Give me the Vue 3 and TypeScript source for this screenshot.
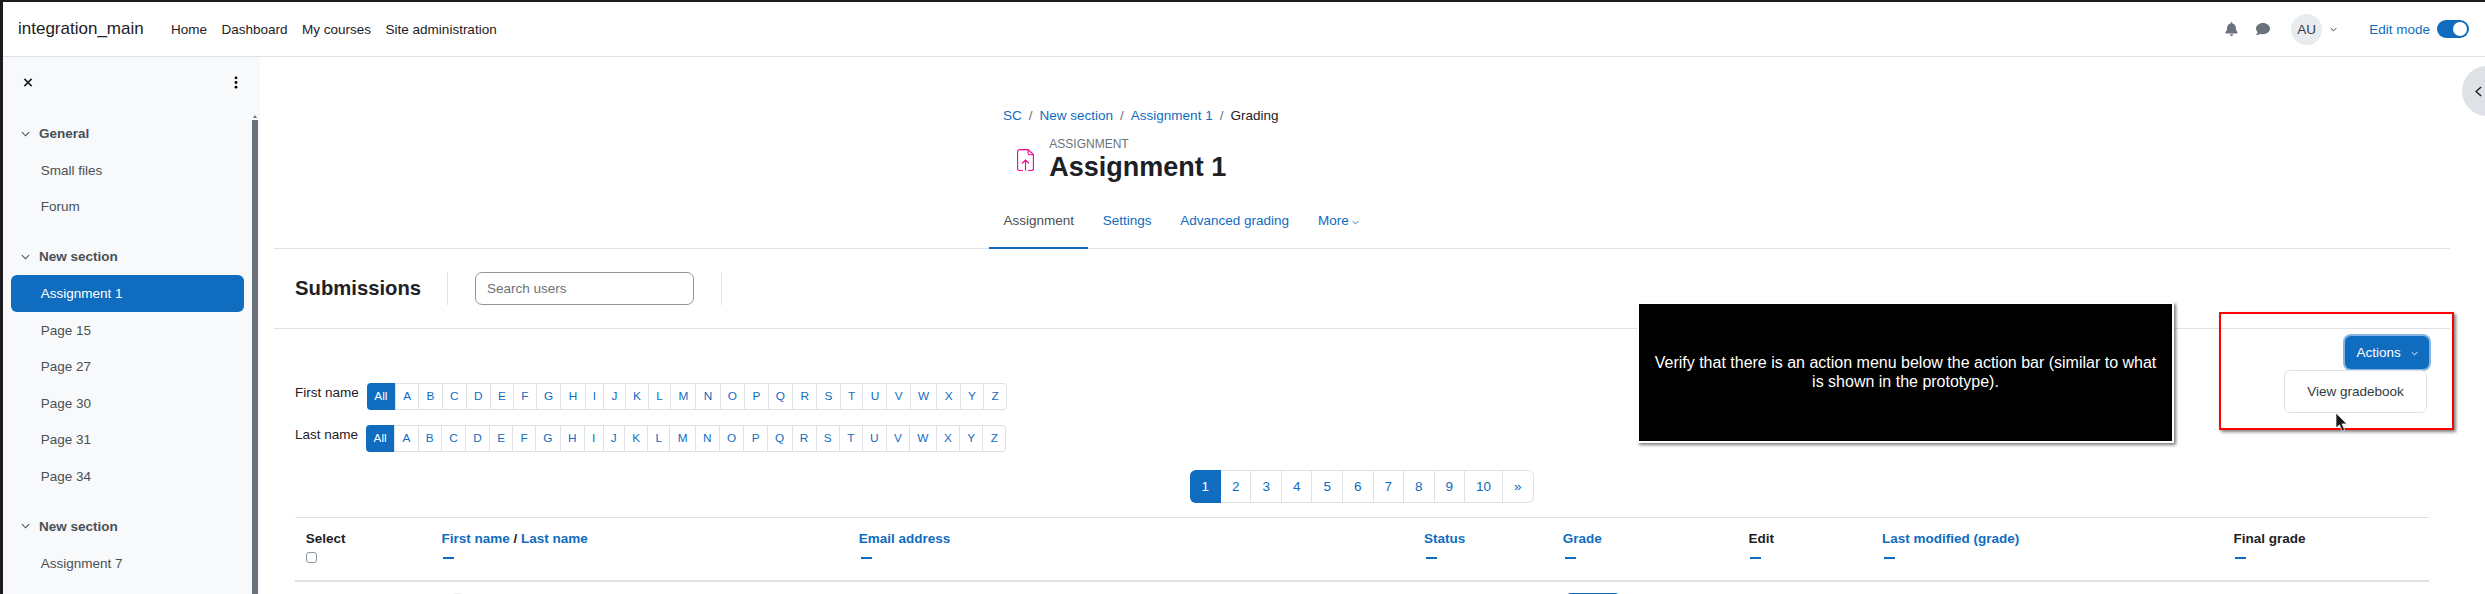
<script setup lang="ts">
const navLinks = ['Home', 'Dashboard', 'My courses', 'Site administration']
const letters = 'ABCDEFGHIJKLMNOPQRSTUVWXYZ'.split('')
const pages = ['2', '3', '4', '5', '6', '7', '8', '9', '10', '»']
const tabs = ['Settings', 'Advanced grading']
const filters = ['First name', 'Last name']

interface Column {
  label: string
  linked: boolean
}

const columns: Column[] = [
  { label: 'Email address', linked: true },
  { label: 'Status', linked: true },
  { label: 'Grade', linked: true },
  { label: 'Edit', linked: false },
  { label: 'Last modified (grade)', linked: true },
  { label: 'Final grade', linked: false },
]

const sections = [
  { title: 'General', items: ['Small files', 'Forum'] },
  { title: 'New section', items: ['Assignment 1', 'Page 15', 'Page 27', 'Page 30', 'Page 31', 'Page 34'] },
  { title: 'New section', items: ['Assignment 7'] },
]
</script>

<template>
  <div class="page">
    <header class="navbar">
      <span class="brand">integration_main</span>
      <nav class="nav-links">
        <a v-for="link in navLinks" :key="link">{{ link }}</a>
      </nav>
      <div class="nav-right">
        <svg viewBox="0 0 448 512" width="13" height="14"><path fill="#6a737b" d="M224 512a64 64 0 0 0 64-64H160a64 64 0 0 0 64 64zm215-150c-19-21-55-52-55-154 0-78-54-140-128-155V32a32 32 0 1 0-64 0v21C118 68 64 130 64 208c0 102-36 133-55 154a31 31 0 0 0-9 22c0 16 13 32 32 32h384c19 0 32-16 32-32a31 31 0 0 0-9-22z"/></svg>
        <svg class="msg" viewBox="0 0 512 512" width="14" height="14"><path fill="#6a737b" d="M256 32C115 32 0 125 0 240c0 50 22 95 58 131-13 50-55 95-55 96a8 8 0 0 0 6 13c67 0 117-32 142-52 32 12 67 20 105 20 141 0 256-93 256-208S397 32 256 32z"/></svg>
        <span class="avatar">AU</span>
        <svg class="caret" viewBox="0 0 10 6" width="7" height="5"><path d="M1 1l4 4 4-4" fill="none" stroke="#343a40" stroke-width="1.4"/></svg>
        <a class="edit-label">Edit mode</a>
        <span class="switch"><span class="knob"></span></span>
      </div>
    </header>

    <div class="body-row">
      <aside class="drawer">
        <div class="drawer-head">
          <svg viewBox="0 0 10 10" width="10" height="9"><path d="M1 1l8 8M9 1l-8 8" stroke="#1d2125" stroke-width="1.8"/></svg>
          <svg viewBox="0 0 4 14" width="4" height="13"><circle cx="2" cy="2" r="1.5"/><circle cx="2" cy="7" r="1.5"/><circle cx="2" cy="12" r="1.5"/></svg>
        </div>
        <div class="drawer-scroll">
          <section v-for="(sec, i) in sections" :key="i" class="course-sec">
            <div class="sec-title">
              <svg viewBox="0 0 10 6" width="9" height="6"><path d="M1 1l4 4 4-4" fill="none" stroke="#495057" stroke-width="1.2"/></svg>
              <span>{{ sec.title }}</span>
            </div>
            <a v-for="item in sec.items" :key="item" class="sec-item" :class="{ active: item === 'Assignment 1' }">{{ item }}</a>
          </section>
        </div>
        <span class="scroll-arrow"></span>
        <div class="scrollbar"></div>
      </aside>

      <main class="main">
        <div class="page-head">
          <div class="crumbs">
            <a>SC</a><i>/</i><a>New section</a><i>/</i><a>Assignment 1</a><i>/</i><span>Grading</span>
          </div>
          <div class="title-row">
            <svg viewBox="0 0 17 22" width="17" height="22"><path d="M6 21.500H2.500A2 2 0 0 1 .6 19.500V2.500A2 2 0 0 1 2.500.6h8.500l5.400 5v14A2 2 0 0 1 14.500 21.500H11M11 .6v3.400a1.700 1.700 0 0 0 1.700 1.700h3.700M8.500 21.700V11M5 14.500L8.500 11l3.500 3.500" fill="none" stroke="#f7028f" stroke-width="1.100"/></svg>
            <div>
              <div class="kicker">ASSIGNMENT</div>
              <h1>Assignment 1</h1>
            </div>
          </div>
        </div>
        <div class="tabs">
          <span class="tab current">Assignment</span>
          <a v-for="t in tabs" :key="t" class="tab">{{ t }}</a>
          <a class="tab more">More
            <svg viewBox="0 0 10 6" width="7" height="5"><path d="M1 1l4 4 4-4" fill="none" stroke="#0f6cbf" stroke-width="1.3"/></svg>
          </a>
        </div>
        <div class="action-bar">
          <h2>Submissions</h2>
          <span class="sep"></span>
          <input class="search" placeholder="Search users" />
          <span class="sep"></span>
        </div>
        <div class="content">
          <div class="actions-row">
            <button class="actions-btn">Actions
              <svg viewBox="0 0 10 6" width="7" height="5"><path d="M1 1l4 4 4-4" fill="none" stroke="#fff" stroke-width="1.300"/></svg>
            </button>
            <div class="menu">View gradebook</div>
          </div>
          <div v-for="f in filters" :key="f" class="initials">
            <span class="init-label">{{ f }}</span>
            <div class="bar">
              <span class="cell on">All</span>
              <a v-for="l in letters" :key="l" class="cell">{{ l }}</a>
            </div>
          </div>
          <div class="pager">
            <span class="pg on">1</span>
            <a v-for="p in pages" :key="p" class="pg">{{ p }}</a>
          </div>
          <div class="table-head grid">
            <div class="th">
              <strong>Select</strong>
              <span class="check"></span>
            </div>
            <div class="th">
              <span><a>First name</a> / <a>Last name</a></span>
              <span class="dash"></span>
            </div>
            <div v-for="c in columns" :key="c.label" class="th">
              <a v-if="c.linked">{{ c.label }}</a>
              <strong v-else>{{ c.label }}</strong>
              <span class="dash"></span>
            </div>
          </div>
          <div class="row grid">
            <div></div>
            <div class="row-name"><span class="row-avatar"></span></div>
            <div></div>
            <div></div>
            <div class="row-grade"><span class="grade-btn"></span></div>
          </div>
        </div>
      </main>
    </div>

    <div class="drawer-toggle">
      <svg viewBox="0 0 8 12" width="7" height="11"><path d="M7 .8L1.200 6 7 11.200" fill="none" stroke="#1d2125" stroke-width="1.700"/></svg>
    </div>
    <div class="note">Verify that there is an action menu below the action bar (similar to what is shown in the prototype).</div>
    <div class="highlight"></div>
    <svg class="cursor" viewBox="0 0 13 21" width="13" height="21"><path d="M1 1v15l3.500-3.200 2.600 6.400 2.600-1.100-2.600-6.200h4.700z" fill="#1a1a1a" stroke="#fff" stroke-width="0.700"/></svg>
  </div>
</template>

<style>
html,
body {
  margin: 0;
  background: #fff;
  overflow: hidden;
}
</style>

<style scoped>
.page {
  position: relative;
  width: 2485px;
  height: 594px;
  overflow: hidden;
  box-sizing: border-box;
  border-top: 2px solid #1c1c1f;
  border-left: 3px solid #1c1c1f;
  font-family: 'Liberation Sans', Arial, sans-serif;
  font-size: 13.5px;
  color: #1d2125;
  background: #fff;
}

a {
  color: #0f6cbf;
}

.navbar {
  display: flex;
  align-items: center;
  height: 54px;
  border-bottom: 1px solid #dee2e6;
  padding-left: 15px;
}

.brand {
  font-size: 17px;
  width: 153px;
}

.nav-links {
  display: flex;
  gap: 14.500px;
}

.nav-links a {
  color: #1d2125;
}

.nav-right {
  margin-left: auto;
  display: flex;
  align-items: center;
  padding-right: 16px;
}

.msg {
  margin-left: 18px;
}

.avatar {
  width: 31px;
  height: 31px;
  border-radius: 50%;
  background: #e9ecef;
  margin-left: 21px;
  display: flex;
  align-items: center;
  justify-content: center;
  color: #343a40;
}

.caret {
  margin-left: 8px;
}

.edit-label {
  margin-left: 32px;
}

.switch {
  width: 32px;
  height: 18px;
  border-radius: 9px;
  background: #0f6cbf;
  margin-left: 7px;
  position: relative;
}

.knob {
  position: absolute;
  right: 2px;
  top: 2px;
  width: 14px;
  height: 14px;
  border-radius: 50%;
  background: #fff;
}

.body-row {
  display: flex;
  height: 537px;
}

.drawer {
  position: relative;
  width: 257px;
  flex: none;
  background: #f8f9fa;
  overflow: hidden;
}

.drawer-head {
  display: flex;
  justify-content: space-between;
  align-items: center;
  height: 50px;
  padding: 0 22px 0 20px;
}

.drawer-scroll {
  padding: 8.400px 0 0 8px;
  width: 233px;
}

.course-sec {
  margin-bottom: 13.400px;
}

.sec-title {
  display: flex;
  align-items: center;
  gap: 9px;
  height: 36.600px;
  padding-left: 10px;
  font-weight: 700;
  color: #495057;
}

.sec-item {
  display: flex;
  align-items: center;
  height: 36.600px;
  padding-left: 29.700px;
  color: #495057;
}

.sec-item.active {
  background: #0f6cbf;
  color: #fff;
  border-radius: 6px;
}

.scroll-arrow {
  position: absolute;
  left: 250px;
  top: 58px;
  border-left: 2.500px solid transparent;
  border-right: 2.500px solid transparent;
  border-bottom: 3px solid #6a737b;
}

.scrollbar {
  position: absolute;
  left: 249px;
  top: 63px;
  bottom: 0;
  width: 6px;
  background: #6a737b;
}

.main {
  flex: 1;
  padding: 0 35px 0 14px;
  min-width: 0;
}

.page-head {
  padding: 50.700px 0 0 729px;
  height: 136px;
  box-sizing: border-box;
}

.crumbs {
  display: flex;
  gap: 7px;
  line-height: 16px;
}

.crumbs i {
  font-style: normal;
  color: #6a737b;
}

.title-row {
  display: flex;
  align-items: center;
  gap: 15px;
  padding-left: 14.300px;
  margin-top: 13.500px;
}

.kicker {
  font-size: 12px;
  line-height: 14px;
  color: #6a737b;
}

h1 {
  margin: 0;
  font-size: 27px;
  line-height: 32px;
  font-weight: 700;
}

.tabs {
  display: flex;
  border-bottom: 1px solid #dee2e6;
  height: 56px;
  box-sizing: border-box;
  padding-left: 715px;
}

.tab {
  display: block;
  height: 56px;
  box-sizing: border-box;
  line-height: 55px;
  padding: 0 14.400px;
}

.tab.current {
  color: #495057;
  border-bottom: 2px solid #0f6cbf;
}

.action-bar {
  display: flex;
  align-items: center;
  height: 80px;
  border-bottom: 1px solid #dee2e6;
  box-sizing: border-box;
  padding-left: 21px;
}

h2 {
  margin: 0;
  font-size: 20.250px;
  font-weight: 700;
  width: 152px;
}

.sep {
  width: 1px;
  height: 33px;
  background: #dee2e6;
}

.search {
  width: 219px;
  height: 33px;
  box-sizing: border-box;
  border: 1px solid #8f959e;
  border-radius: 7px;
  margin: 0 27px;
  padding: 0 11px;
  font: inherit;
}

.search::placeholder {
  color: #6a737b;
}

.content {
  padding: 0 21px;
}

.actions-row {
  position: relative;
  display: flex;
  justify-content: flex-end;
  height: 54px;
  padding-top: 7px;
  box-sizing: border-box;
}

.actions-btn {
  width: 84px;
  height: 33px;
  background: #0f6cbf;
  color: #fff;
  border: none;
  padding: 0;
  border-radius: 6px;
  box-shadow: 0 0 0 2px rgba(15, 108, 191, 0.5);
  font: inherit;
  white-space: nowrap;
}

.actions-btn svg {
  margin-left: 6px;
  vertical-align: 1px;
}

.menu {
  position: absolute;
  right: 2px;
  top: 41px;
  width: 143px;
  height: 43px;
  box-sizing: border-box;
  line-height: 41px;
  text-align: center;
  border: 1px solid #dee2e6;
  border-radius: 6px;
  background: #fff;
  color: #343a40;
}

.initials {
  display: flex;
  height: 42px;
}

.init-label {
  margin-right: 8px;
  line-height: 16px;
  padding-top: 2px;
}

.bar {
  display: flex;
  height: 27px;
  border: 1px solid #dee2e6;
  border-left: none;
  border-radius: 4px;
  box-sizing: border-box;
}

.cell {
  padding: 0 7.250px;
  line-height: 25px;
  font-size: 11.800px;
  border-left: 1px solid #dee2e6;
}

.cell.on {
  background: #0f6cbf;
  color: #fff;
  padding: 0 7.500px;
  border-left: none;
  margin-top: -1px;
  height: 27px;
  line-height: 27px;
  border-radius: 4px 0 0 4px;
}

.pager {
  display: flex;
  justify-content: center;
  height: 33px;
  margin-top: 3px;
}

.pg {
  line-height: 31px;
  padding: 0 11px;
  border: 1px solid #dee2e6;
  border-left: none;
  box-sizing: border-box;
}

.pg:last-child {
  border-radius: 0 6px 6px 0;
}

.pg.on {
  background: #0f6cbf;
  color: #fff;
  border-color: #0f6cbf;
  border-radius: 6px 0 0 6px;
}

.grid {
  display: grid;
  grid-template-columns: 135.600px 417.400px 565.200px 138.800px 185.700px 133.500px 351.500px 206.300px;
}

.table-head {
  margin-top: 14px;
  height: 65px;
  box-sizing: border-box;
  border-top: 1px solid #dee2e6;
  border-bottom: 2px solid #dee2e6;
}

.th {
  display: flex;
  flex-direction: column;
  align-items: flex-start;
  padding: 12.700px 0 0 10.800px;
  line-height: 16px;
  font-weight: 700;
}

.dash {
  width: 11px;
  height: 2px;
  background: #0f6cbf;
  margin: 10px 0 0 2px;
}

.check {
  width: 11px;
  height: 11px;
  box-sizing: border-box;
  border: 1px solid #8f959e;
  border-radius: 3px;
  margin-top: 5.600px;
}

.row {
  padding-top: 11px;
}

.row-avatar {
  display: block;
  width: 30px;
  height: 30px;
  margin-left: 11px;
  border-radius: 50%;
  background: #e9ecef;
}

.grade-btn {
  display: block;
  width: 52px;
  height: 30px;
  margin-left: 15px;
  border-radius: 4px;
  background: #0f6cbf;
}

.drawer-toggle {
  position: absolute;
  left: 2459px;
  top: 64px;
  width: 50px;
  height: 50px;
  border-radius: 50%;
  background: #dee2e6;
  display: flex;
  align-items: center;
  padding-left: 13px;
  box-sizing: border-box;
}

.note {
  position: absolute;
  left: 1634px;
  top: 300px;
  width: 537px;
  height: 141px;
  box-sizing: border-box;
  background: #000;
  color: #fff;
  border: 2px solid #fff;
  box-shadow: 2px 2px 3px rgba(0, 0, 0, 0.5);
  display: flex;
  align-items: center;
  justify-content: center;
  text-align: center;
  padding: 0 12px;
  font-size: 16px;
  line-height: 18.600px;
}

.highlight {
  position: absolute;
  left: 2216px;
  top: 310px;
  width: 235px;
  height: 118px;
  box-sizing: border-box;
  border: 2px solid #f00;
  box-shadow: 2px 2px 3px rgba(0, 0, 0, 0.5);
}

.cursor {
  position: absolute;
  left: 2332px;
  top: 410px;
}
</style>
